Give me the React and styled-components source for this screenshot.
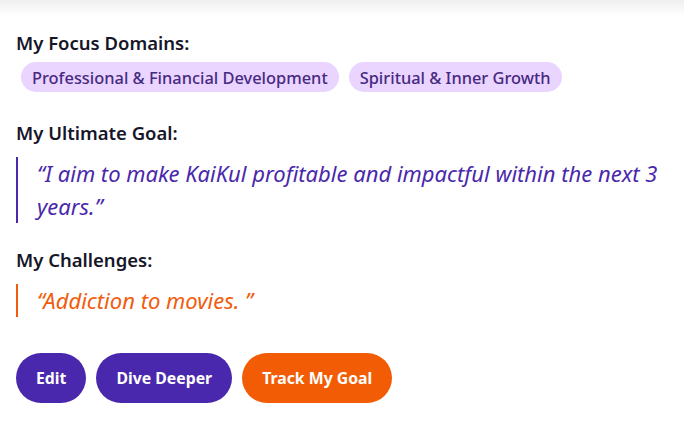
import styled, { createGlobalStyle } from 'styled-components';

const GlobalStyle = createGlobalStyle`
  body {
    margin: 0;
    background: #ffffff;
    font-family: "Noto Sans", "Open Sans", sans-serif;
  }
`;

const TopShade = styled.div`
  height: 16px;
  background: linear-gradient(to bottom, #efefef, #ffffff);
`;

const Wrapper = styled.div`
  padding: 13px 16px 0 16px;
  width: 652px;
`;

const Section = styled.div`
  margin-bottom: ${(p) => p.gap}px;
`;

const Heading = styled.h3`
  margin: 0 0 5px 0;
  font-size: 18.5px;
  font-weight: 600;
  line-height: 28px;
  color: #161629;
`;

const ChipRow = styled.div`
  display: flex;
  gap: 10px;
  padding-left: 5px;
`;

const Chip = styled.span`
  display: inline-flex;
  align-items: center;
  height: 30px;
  padding: 0 11px;
  border-radius: 15px;
  background: #e9d5ff;
  color: #47297f;
  font-size: 16.4px;
  font-weight: 500;
`;

// margin collapses with the heading's, so this is the real gap
const Quote = styled.blockquote`
  margin: 10px 0 0 0;
  padding-left: 19px;
  border-left: 2px solid ${(p) => p.color};
  color: ${(p) => p.color};
  font-style: italic;
  font-size: 22px;
  line-height: 33px;
`;

const ButtonRow = styled.div`
  display: flex;
  gap: 10px;
`;

const Button = styled.button`
  height: 50px;
  padding: 0 20px;
  border: none;
  border-radius: 25px;
  background: ${(p) => p.bg};
  color: #ffffff;
  font-family: inherit;
  font-size: 15.8px;
  font-weight: 700;
  cursor: pointer;
`;

export default function App() {
  return (
    <>
      <GlobalStyle />
      <TopShade />
      <Wrapper>
        <Section gap={27}>
          <Heading>My Focus Domains:</Heading>
          <ChipRow>
            <Chip>Professional &amp; Financial Development</Chip>
            <Chip>Spiritual &amp; Inner Growth</Chip>
          </ChipRow>
        </Section>
        <Section gap={23}>
          <Heading>My Ultimate Goal:</Heading>
          <Quote color="#4a28ab">
            “I aim to make KaiKul profitable and impactful within the next 3 years.”
          </Quote>
        </Section>
        <Section gap={36}>
          <Heading>My Challenges:</Heading>
          <Quote color="#f15c0c">“Addiction to movies. ”</Quote>
        </Section>
        <ButtonRow>
          <Button bg="#4a28ad">Edit</Button>
          <Button bg="#4a28ad">Dive Deeper</Button>
          <Button bg="#f25c05">Track My Goal</Button>
        </ButtonRow>
      </Wrapper>
    </>
  );
}
